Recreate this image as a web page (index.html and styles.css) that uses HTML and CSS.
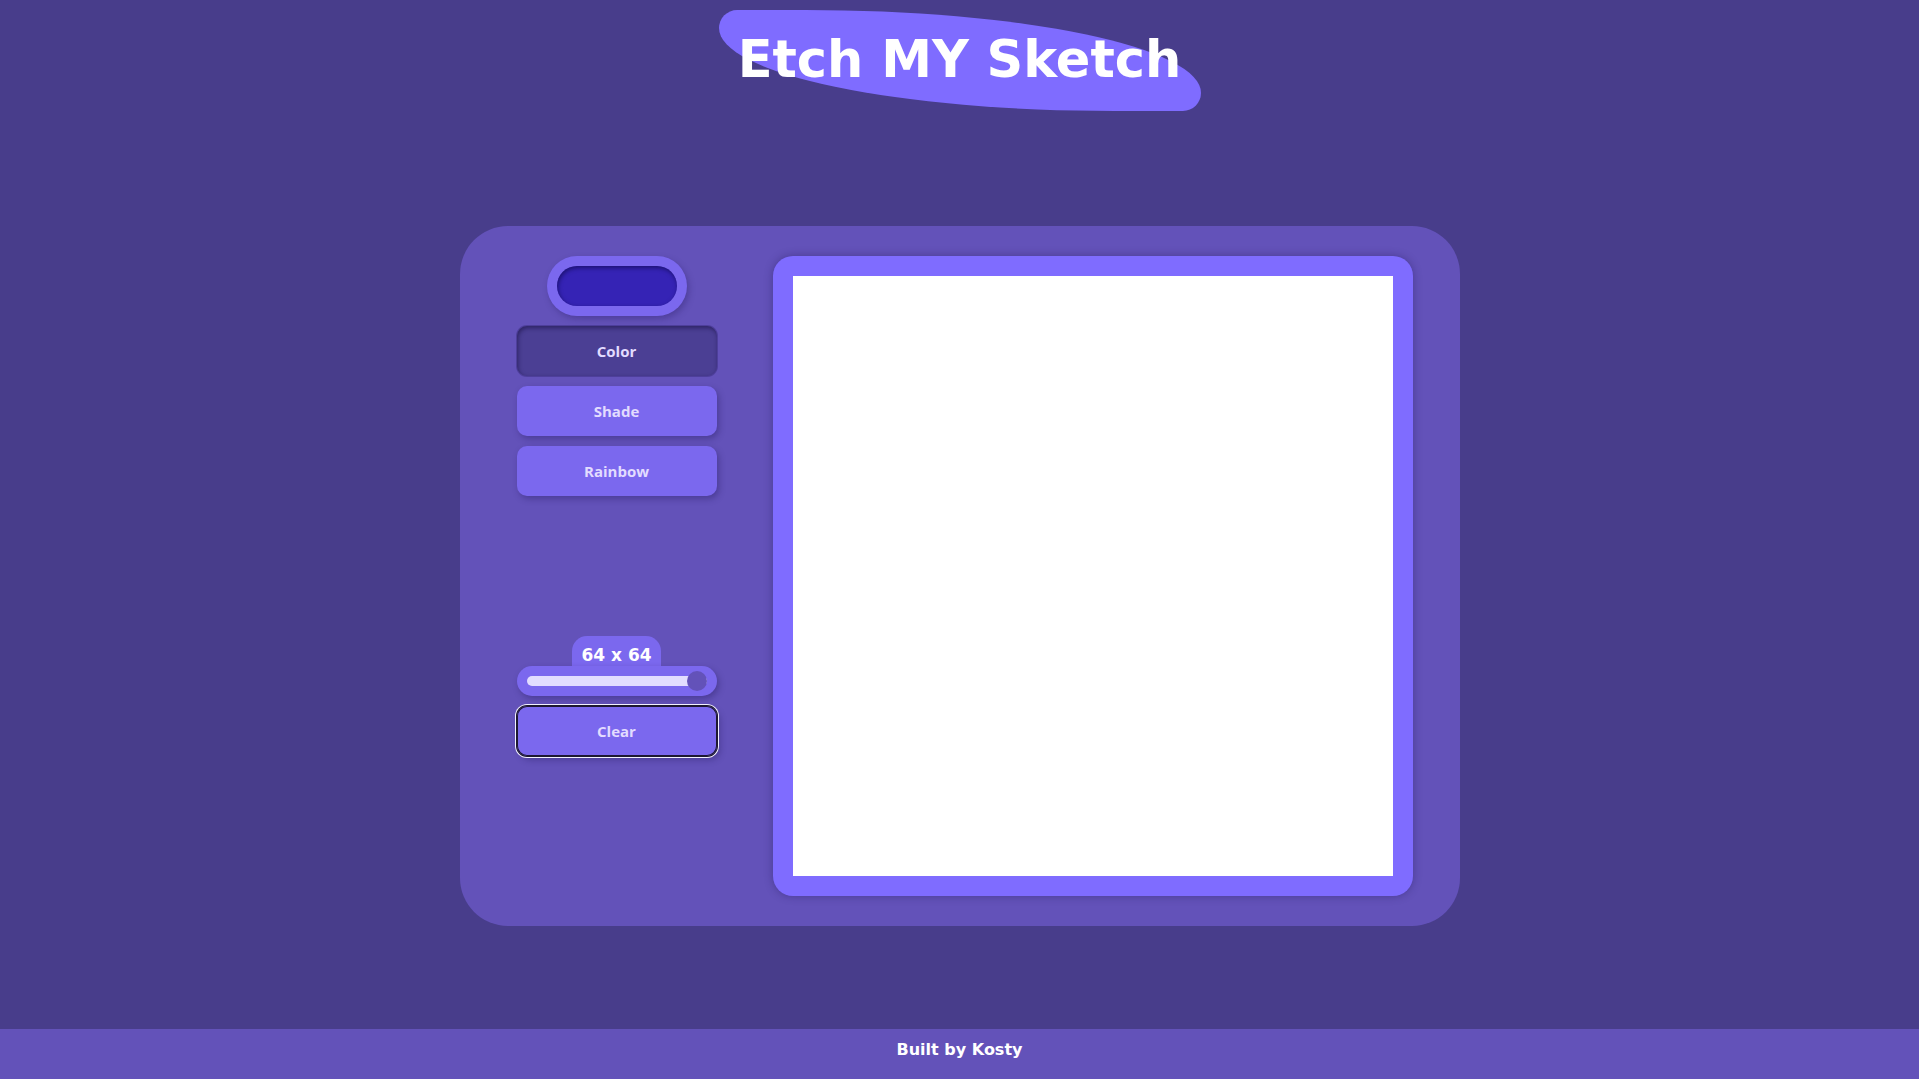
FILE: index.html
```html
<!DOCTYPE html>
<html lang="en">
<head>
<meta charset="utf-8">
<title>Etch MY Sketch</title>
<link rel="stylesheet" href="styles.css">
</head>
<body>
  <header class="header">
    <h1 class="title">Etch MY Sketch</h1>
  </header>
  <main class="panel">
    <aside class="controls">
      <div class="picker"><div class="picker-swatch"></div></div>
      <button class="btn btn-active">Color</button>
      <button class="btn">Shade</button>
      <button class="btn">Rainbow</button>
      <div class="size-group">
        <div class="size-label">64 x 64</div>
        <div class="slider">
          <div class="slider-fill"></div>
          <div class="slider-thumb"></div>
        </div>
        <button class="btn btn-clear">Clear</button>
      </div>
    </aside>
    <section class="frame">
      <div class="canvas"></div>
    </section>
  </main>
  <footer class="footer">Built by Kosty</footer>
</body>
</html>
```
FILE: styles.css
```css
* { box-sizing: border-box; }
html, body { margin: 0; padding: 0; }
body {
  background: #483d8b;
  min-height: 100vh;
  display: flex;
  flex-direction: column;
  align-items: center;
  font-family: "DejaVu Sans", sans-serif;
}
.header {
  padding-top: 10px;
  display: flex;
  justify-content: center;
}
.title {
  margin: 0;
  width: 482px;
  height: 101px;
  background: #7f6cff;
  border-radius: 22px 100% 22px 100%;
  color: #ffffff;
  font-family: "DejaVu Sans", sans-serif;
  font-weight: bold;
  font-size: 51px;
  letter-spacing: 0;
  display: flex;
  align-items: center;
  justify-content: center;
  line-height: 1;
  padding-bottom: 2px;
}
.panel {
  margin-top: 115px;
  width: 1000px;
  height: 700px;
  background: #6352b9;
  border-radius: 48px;
  display: flex;
  padding: 30px 47px 30px 0;
}
.controls {
  width: 313px;
  padding-left: 1px;
  display: flex;
  flex-direction: column;
  align-items: center;
}
.picker {
  width: 140px;
  height: 60px;
  padding: 10px;
  border-radius: 30px;
  background: #7b68ee;
  box-shadow: 2px 3px 6px rgba(40, 30, 100, 0.35);
  margin-bottom: 10px;
}
.picker-swatch {
  width: 120px;
  height: 40px;
  border-radius: 20px;
  background: #3523b5;
  box-shadow: inset 1px 2px 4px rgba(10, 5, 60, 0.55);
}
.btn {
  width: 200px;
  height: 50px;
  border: none;
  border-radius: 10px;
  background: #7b68ee;
  color: #e2dcff;
  font-family: "Open Sans", sans-serif;
  font-weight: bold;
  font-size: 15px;
  margin-bottom: 10px;
  box-shadow: 2px 3px 6px rgba(40, 30, 100, 0.4);
  padding: 0;
}
.btn-active {
  background: #4b3f94;
  box-shadow: inset 1px 2px 4px rgba(20, 12, 60, 0.55), 0 0 0 1px rgba(40, 30, 100, 0.35);
}
.size-group {
  margin-top: 130px;
  display: flex;
  flex-direction: column;
  align-items: center;
}
.size-label {
  width: 89px;
  height: 30px;
  border-radius: 15px 15px 0 0;
  background: #7b68ee;
  color: #ffffff;
  font-weight: bold;
  font-size: 17px;
  line-height: 30px;
  padding-top: 4px;
  text-align: center;
}
.slider {
  width: 200px;
  height: 30px;
  border-radius: 15px;
  background: #7b68ee;
  padding: 5px 10px;
  display: flex;
  align-items: center;
  box-shadow: 2px 3px 6px rgba(40, 30, 100, 0.4);
  margin-bottom: 10px;
}
.slider-fill {
  flex: 1;
  height: 10px;
  border-radius: 5px;
  background: #e2ddff;
}
.slider-thumb {
  width: 20px;
  height: 20px;
  border-radius: 50%;
  background: #6352b9;
  margin-left: -20px;
}
.btn-clear {
  box-shadow: inset 0 0 0 1px #1d1830, 0 0 0 1px #1d1830, 0 0 0 2px #f2f0ff, 3px 4px 6px rgba(40, 30, 100, 0.4);
}
.frame {
  width: 640px;
  height: 640px;
  padding: 20px;
  border-radius: 20px;
  background: #7f6cff;
  box-shadow: 0 0 8px rgba(40, 30, 100, 0.45);
}
.canvas {
  width: 600px;
  height: 600px;
  background: #ffffff;
}
.footer {
  margin-top: auto;
  width: 100%;
  height: 50px;
  background: #6352b9;
  color: #ffffff;
  font-weight: bold;
  font-size: 16px;
  display: flex;
  justify-content: center;
  align-items: center;
  padding-bottom: 10px;
}
```
